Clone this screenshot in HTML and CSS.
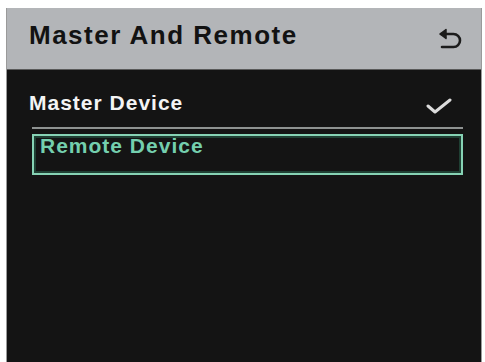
FILE: index.html
```html
<!DOCTYPE html>
<html>
<head>
<meta charset="utf-8">
<link rel="stylesheet" href="styles.css">
</head>
<body>
<div class="screen">
  <div class="header">
    <span class="title">Master And Remote</span>
    <svg class="back" width="26" height="22" viewBox="0 0 26 22">
      <path d="M4 6 H16.5 A6.5 6.5 0 0 1 16.5 19 H5" fill="none" stroke="#1c1c1c" stroke-width="2.6" stroke-linecap="round"/>
      <path d="M9 1.5 L3 6 L9 10.5 Z" fill="#1c1c1c" stroke="#1c1c1c" stroke-width="1.5" stroke-linejoin="round"/>
    </svg>
  </div>
  <div class="list">
    <div class="row">
      <span class="label">Master Device</span>
      <svg class="check" width="26" height="17" viewBox="0 0 26 17">
        <path d="M2 9 L9 15 L24 3" fill="none" stroke="#dcdcdc" stroke-width="3" stroke-linecap="round" stroke-linejoin="round"/>
      </svg>
    </div>
    <div class="sep"></div>
    <div class="selected">Remote Device</div>
  </div>
</div>
</body>
</html>
```

FILE: styles.css
```css
html, body {
  margin: 0;
  padding: 0;
  background: #ffffff;
}
body {
  font-family: "Liberation Sans", Arial, sans-serif;
}
.screen {
  margin: 8px 4px 0 7px;
  width: 474px;
  height: 354px;
  background: #141414;
  box-shadow: -1px 0 0 #9a9a9a, 1px 0 0 #9a9a9a;
  display: flex;
  flex-direction: column;
}
.header {
  height: 62px;
  background: #b3b5b8;
  display: flex;
  align-items: center;
  justify-content: space-between;
  padding: 0 18px 6px 22px;
  box-sizing: border-box;
  border-bottom: 1px solid #5a5a5a;
}
.title {
  font-size: 26px;
  font-weight: bold;
  letter-spacing: 1.5px;
  color: #121212;
}
.back {
  display: block;
  margin-top: 6px;
}
.list {
  padding: 21px 18px 0 22px;
}
.row {
  display: flex;
  justify-content: space-between;
  align-items: flex-start;
  line-height: 24px;
}
.label {
  font-size: 21px;
  font-weight: bold;
  letter-spacing: 1px;
  color: #f4f4f4;
}
.check {
  display: block;
  margin: 6px 11px 0 0;
}
.sep {
  height: 2px;
  background: #8e9291;
  margin: 12px 0 5px 3px;
}
.selected {
  margin-left: 3px;
  border: 2px solid #86d2b4;
  box-shadow: inset 0 0 0 2px #1f3f33;
  font-size: 21px;
  font-weight: bold;
  letter-spacing: 1px;
  color: #74cfae;
  line-height: 20px;
  padding: 0 0 17px 6px;
}
```
